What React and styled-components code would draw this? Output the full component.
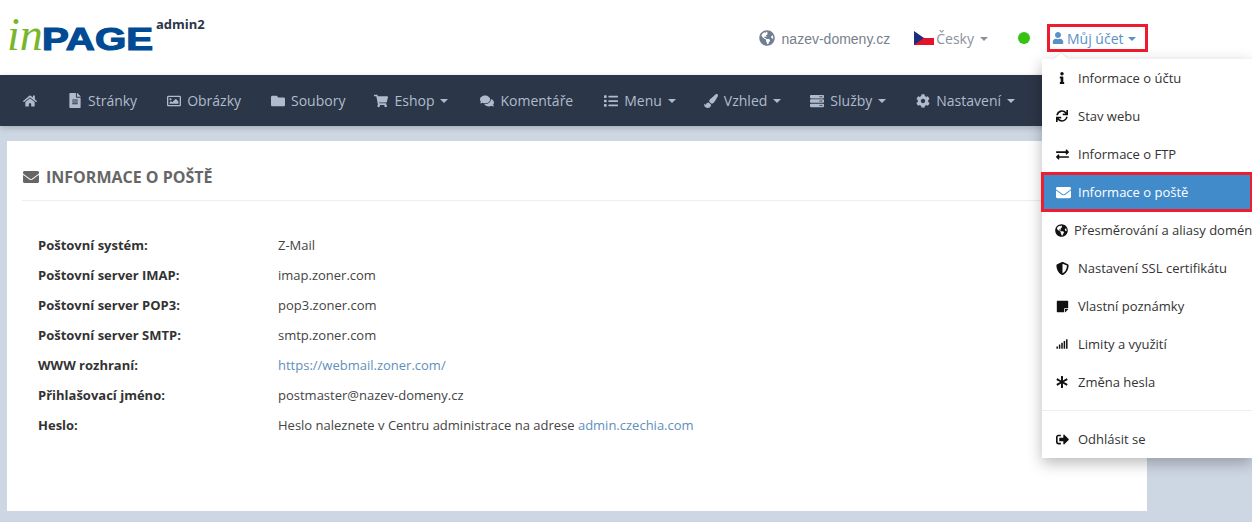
import styled, { createGlobalStyle } from "styled-components";
import {
  FaHome,
  FaFileAlt,
  FaRegImage,
  FaFolder,
  FaShoppingCart,
  FaComments,
  FaList,
  FaPaintBrush,
  FaServer,
  FaCog,
  FaGlobeAmericas,
  FaUser,
  FaInfo,
  FaSync,
  FaExchangeAlt,
  FaEnvelope,
  FaShieldAlt,
  FaStickyNote,
  FaSignal,
  FaAsterisk,
  FaSignOutAlt,
} from "react-icons/fa";

const Link = styled.a`
  color: #5f8fbb;
  text-decoration: none;
`;

const navItems = [
  { icon: FaFileAlt, label: "Stránky", nudge: 1, iconSize: 15 },
  { icon: FaRegImage, label: "Obrázky" },
  { icon: FaFolder, label: "Soubory" },
  { icon: FaShoppingCart, label: "Eshop", caret: true, nudge: -1 },
  { icon: FaComments, label: "Komentáře", nudge: 2 },
  { icon: FaList, label: "Menu", caret: true, nudge: 1 },
  { icon: FaPaintBrush, label: "Vzhled", caret: true, nudge: -2 },
  { icon: FaServer, label: "Služby", caret: true, nudge: -1 },
  { icon: FaCog, label: "Nastavení", caret: true },
];

const menuItems = [
  { icon: FaInfo, label: "Informace o účtu", iconSize: 12 },
  { icon: FaSync, label: "Stav webu", iconSize: 12 },
  { icon: FaExchangeAlt, label: "Informace o FTP" },
  { icon: FaEnvelope, label: "Informace o poště", active: true, iconSize: 15 },
  { icon: FaGlobeAmericas, label: "Přesměrování a aliasy domén", tight: true },
  { icon: FaShieldAlt, label: "Nastavení SSL certifikátu" },
  { icon: FaStickyNote, label: "Vlastní poznámky" },
  { icon: FaSignal, label: "Limity a využití", iconSize: 12 },
  { icon: FaAsterisk, label: "Změna hesla", iconSize: 12 },
];

const mailInfo = [
  { label: "Poštovní systém:", value: "Z-Mail" },
  { label: "Poštovní server IMAP:", value: "imap.zoner.com" },
  { label: "Poštovní server POP3:", value: "pop3.zoner.com" },
  { label: "Poštovní server SMTP:", value: "smtp.zoner.com" },
  { label: "WWW rozhraní:", value: <Link href="#">https://webmail.zoner.com/</Link> },
  { label: "Přihlašovací jméno:", value: "postmaster@nazev-domeny.cz" },
  {
    label: "Heslo:",
    value: (
      <>
        Heslo naleznete v Centru administrace na adrese <Link href="#">admin.czechia.com</Link>
      </>
    ),
  },
];

function Logo() {
  return (
    <LogoSvg viewBox="0 0 150 60" width="150" height="60">
      <text
        x="0"
        y="48"
        fontFamily="Liberation Serif, serif"
        fontStyle="italic"
        fontSize="46"
        fill="#76b82a"
      >
        in
      </text>
      <text
        x="35"
        y="48"
        fontFamily="Liberation Sans, sans-serif"
        fontWeight="700"
        fontSize="31"
        fill="#004b93"
        stroke="#004b93"
        strokeWidth="1.2"
        textLength="111"
        lengthAdjust="spacingAndGlyphs"
      >
        PAGE
      </text>
    </LogoSvg>
  );
}

function CzechFlag() {
  return (
    <FlagSvg viewBox="0 0 20 14" width="20" height="14">
      <rect width="20" height="7" fill="#ffffff" />
      <rect y="7" width="20" height="7" fill="#e3132c" />
      <path d="M0 0 L10 7 L0 14 Z" fill="#1b2f7a" />
    </FlagSvg>
  );
}

export default function App() {
  return (
    <Page>
      <GlobalStyle />
      <TopBar>
        <Logo />
        <SiteName>admin2</SiteName>
        <TopRight>
          <DomainLink>
            <FaGlobeAmericas size={16} />
            nazev-domeny.cz
          </DomainLink>
          <LangSwitch>
            <CzechFlag />
            Česky
            <Caret />
          </LangSwitch>
          <StatusDot />
          <Account>
            <AccountButton>
              <FaUser size={12} />
              Můj účet
              <Caret />
            </AccountButton>
            <Dropdown>
              {menuItems.map((item) => (
                <MenuRow key={item.label} $active={item.active} $tight={item.tight}>
                  <MenuIcon $tight={item.tight}>
                    <item.icon size={item.iconSize || 13} />
                  </MenuIcon>
                  {item.label}
                </MenuRow>
              ))}
              <MenuDivider />
              <MenuRow>
                <MenuIcon>
                  <FaSignOutAlt size={13} />
                </MenuIcon>
                Odhlásit se
              </MenuRow>
            </Dropdown>
          </Account>
        </TopRight>
      </TopBar>

      <NavBar>
        <NavItem>
          <FaHome size={14} />
        </NavItem>
        {navItems.map((item) => (
          <NavItem key={item.label} $nudge={item.nudge}>
            <NavIcon>
              <item.icon size={item.iconSize || 14} />
            </NavIcon>
            {item.label}
            {item.caret && <Caret />}
          </NavItem>
        ))}
      </NavBar>

      <Content>
        <Panel>
          <PanelTitle>
            <FaEnvelope size={16} />
            INFORMACE O POŠTĚ
          </PanelTitle>
          <InfoList>
            {mailInfo.map((row) => (
              <InfoRow key={row.label}>
                <InfoLabel>{row.label}</InfoLabel>
                <InfoValue>{row.value}</InfoValue>
              </InfoRow>
            ))}
          </InfoList>
        </Panel>
      </Content>
    </Page>
  );
}

const GlobalStyle = createGlobalStyle`
  html, body {
    margin: 0;
    padding: 0;
    background: #cdd6e3;
    font-family: "Open Sans", "Liberation Sans", sans-serif;
  }
`;

const Page = styled.div`
  width: 1252px;
  height: 522px;
  overflow: hidden;
  position: relative;
`;

const TopBar = styled.header`
  height: 75px;
  background: #ffffff;
  display: flex;
  align-items: flex-start;
  padding-left: 7px;
  box-sizing: border-box;
`;

const LogoSvg = styled.svg`
  margin-top: 2px;
  flex: none;
`;

const SiteName = styled.span`
  margin: 15px 0 0 -1px;
  font-size: 13px;
  line-height: 18px;
  font-weight: 700;
  color: #2c3648;
`;

const TopRight = styled.div`
  margin-left: auto;
  margin-right: 104px;
  height: 28px;
  margin-top: 24px;
  display: flex;
  align-items: center;
  font-size: 14px;
`;

const DomainLink = styled.span`
  display: flex;
  align-items: center;
  gap: 7px;
  color: #777f8b;
  font-family: "Liberation Sans", sans-serif;
  font-size: 14px;
  margin-top: 1px;
  svg {
    margin-top: -2px;
    color: #707f92;
  }
`;

const LangSwitch = styled.span`
  display: flex;
  align-items: center;
  margin-left: 24px;
  color: #8a929d;
`;

const FlagSvg = styled.svg`
  margin-right: 2px;
`;

const Caret = styled.i`
  display: inline-block;
  width: 0;
  height: 0;
  margin-left: 6px;
  margin-top: 1px;
  border-top: 4px solid currentColor;
  border-left: 4px solid transparent;
  border-right: 4px solid transparent;
`;

const StatusDot = styled.span`
  width: 12px;
  height: 12px;
  margin-left: 30px;
  border-radius: 50%;
  background: #35c211;
`;

const Account = styled.div`
  position: relative;
  margin-left: 17px;
`;

const AccountButton = styled.div`
  width: 101px;
  height: 28px;
  box-sizing: border-box;
  padding-left: 2px;
  display: flex;
  align-items: center;
  border: 3px solid #ed1c2e;
  color: #5a8fc8;
  font-size: 14px;
  svg {
    margin-right: 3px;
  }
  i {
    margin-left: 4px;
  }
`;

const Dropdown = styled.div`
  position: absolute;
  z-index: 5;
  top: 35px;
  left: -5px;
  width: 210px;
  background: #ffffff;
  box-shadow: 0 5px 14px rgba(0, 0, 0, 0.28);
  font-size: 13px;
  color: #333333;

  &::before {
    content: "";
    position: absolute;
    top: -6px;
    left: 12px;
    width: 0;
    height: 0;
    border-left: 7px solid transparent;
    border-right: 7px solid transparent;
    border-bottom: 6px solid #ffffff;
    filter: drop-shadow(0 -1px 0 #e3e3e3);
  }
`;

const MenuRow = styled.div`
  height: 38px;
  box-sizing: border-box;
  display: flex;
  align-items: center;
  white-space: nowrap;
  padding-left: ${(props) => (props.$tight ? "13px" : "14px")};
  position: relative;
  background: ${(props) => (props.$active ? "#428bca" : "transparent")};
  color: ${(props) => (props.$active ? "#ffffff" : "#333333")};
  ${(props) => props.$active && `outline: 3px solid #ed1c2e; outline-offset: -2px;`}

  svg {
    color: ${(props) => (props.$active ? "#ffffff" : "#111111")};
  }
`;

const MenuIcon = styled.span`
  width: ${(props) => (props.$tight ? "19px" : "22px")};
  display: flex;
  flex: none;
`;

const MenuDivider = styled.div`
  height: 1px;
  margin: 9px 0;
  background: #eeeeee;
`;

const NavBar = styled.nav`
  height: 51px;
  background: #2b3648;
  display: flex;
  align-items: stretch;
  padding-left: 8px;
  box-shadow: 0 2px 6px rgba(0, 0, 0, 0.2);
`;

const NavItem = styled.a`
  display: flex;
  align-items: center;
  gap: 6px;
  padding: 0 15px;
  margin-left: ${(props) => props.$nudge || 0}px;
  color: #b0bccc;
  font-size: 14px;
  i {
    margin-left: 0;
  }
`;

const NavIcon = styled.span`
  width: 14px;
  display: flex;
  justify-content: center;
`;

const Content = styled.main`
  padding: 15px 105px 11px 7px;
`;

const Panel = styled.section`
  height: 370px;
  background: #ffffff;
  padding: 0 15px;
`;

const PanelTitle = styled.h2`
  height: 60px;
  margin: 0;
  display: flex;
  align-items: center;
  gap: 7px;
  font-size: 16px;
  font-weight: 700;
  color: #666666;
  border-bottom: 1px solid #eeeeee;
  padding: 13px 0 0 1px;
  box-sizing: border-box;
`;

const InfoList = styled.dl`
  margin: 29px 0 0 16px;
`;

const InfoRow = styled.div`
  height: 30px;
  display: flex;
  align-items: center;
  font-size: 13px;
`;

const InfoLabel = styled.dt`
  width: 240px;
  font-weight: 700;
  color: #333333;
`;

const InfoValue = styled.dd`
  margin: 0;
  color: #444444;
`;
